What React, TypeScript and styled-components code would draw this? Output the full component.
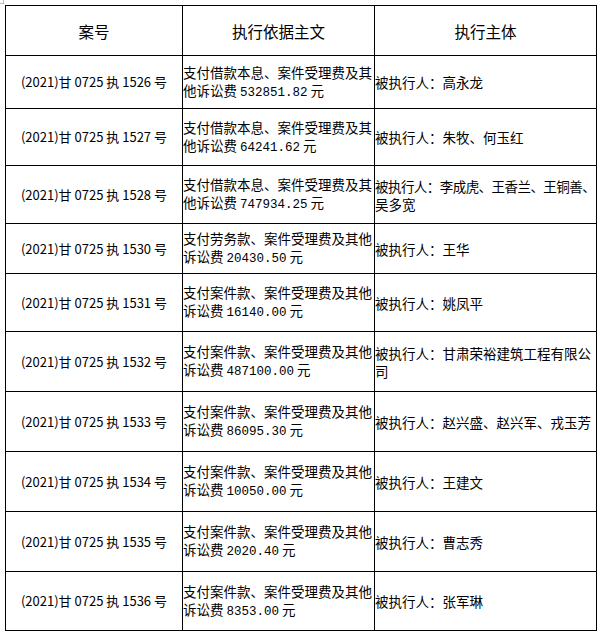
import React from "react";
import styled, { createGlobalStyle } from "styled-components";

const Global = createGlobalStyle`
  html, body { margin: 0; padding: 0; background: #fff; }
  body { font-family: "Noto Sans CJK SC", "Liberation Sans", sans-serif; color: #000; }
`;

const Page = styled.div`
  position: relative;
  padding: 5px 0 0 5px;
`;

const Mark = styled.div<{ $x: number; $y: number }>`
  position: absolute;
  left: ${(p) => p.$x}px;
  top: ${(p) => p.$y}px;
  width: 3px;
  height: 3px;
  border-right: 1px solid #bbb;
  border-bottom: 1px solid #bbb;
`;

const Table = styled.table`
  border-collapse: collapse;
  table-layout: fixed;
  width: 591px;
`;

const HeadCell = styled.th`
  border: 1.5px solid #000;
  height: 49px;
  padding: 0;
  font-weight: 400;
  font-size: 15.5px;
  text-align: center;
  vertical-align: middle;
`;

const Cell = styled.td<{ $center?: boolean; $h: number }>`
  border: 1.5px solid #000;
  padding: 0;
  height: ${(p) => p.$h - 1}px;
  font-size: ${(p) => (p.$center ? 13 : 13.5)}px;
  line-height: 18px;
  text-align: ${(p) => (p.$center ? "center" : "left")};
  vertical-align: middle;
  overflow: visible;
  word-break: break-all;
`;

const Line = styled.span<{ $tight?: boolean }>`
  display: block;
  white-space: nowrap;
  letter-spacing: ${(p) => (p.$tight ? "-0.55px" : "0")};
`;

const Num = styled.span`
  font-family: "Liberation Mono", "DejaVu Sans Mono", monospace;
  font-size: 12.5px;
`;

type Row = { no: string; basis: [string, string]; who: string[]; h: number };

const rows: Row[] = [
  { no: "1526", basis: ["支付借款本息、案件受理费及其他诉讼费 ", "532851.82"], who: ["被执行人：高永龙"], h: 53 },
  { no: "1527", basis: ["支付借款本息、案件受理费及其他诉讼费 ", "64241.62"], who: ["被执行人：朱牧、何玉红"], h: 57 },
  { no: "1528", basis: ["支付借款本息、案件受理费及其他诉讼费 ", "747934.25"], who: ["被执行人：李成虎、王香兰、王铜善、", "吴多宽"], h: 58 },
  { no: "1530", basis: ["支付劳务款、案件受理费及其他诉讼费 ", "20430.50"], who: ["被执行人：王华"], h: 50 },
  { no: "1531", basis: ["支付案件款、案件受理费及其他诉讼费 ", "16140.00"], who: ["被执行人：姚凤平"], h: 58 },
  { no: "1532", basis: ["支付案件款、案件受理费及其他诉讼费 ", "487100.00"], who: ["被执行人：甘肃荣裕建筑工程有限公", "司"], h: 60 },
  { no: "1533", basis: ["支付案件款、案件受理费及其他诉讼费 ", "86095.30"], who: ["被执行人：赵兴盛、赵兴军、戎玉芳"], h: 60 },
  { no: "1534", basis: ["支付案件款、案件受理费及其他诉讼费 ", "10050.00"], who: ["被执行人：王建文"], h: 60 },
  { no: "1535", basis: ["支付案件款、案件受理费及其他诉讼费 ", "2020.40"], who: ["被执行人：曹志秀"], h: 60 },
  { no: "1536", basis: ["支付案件款、案件受理费及其他诉讼费 ", "8353.00"], who: ["被执行人：张军琳"], h: 59 },
];

export default function App() {
  return (
    <>
      <Global />
      <Page>
        <Mark $x={0} $y={0} />
        <Table>
          <colgroup>
            <col style={{ width: 177 }} />
            <col style={{ width: 192 }} />
            <col style={{ width: 222 }} />
          </colgroup>
          <thead>
            <tr>
              <HeadCell>案号</HeadCell>
              <HeadCell>执行依据主文</HeadCell>
              <HeadCell>执行主体</HeadCell>
            </tr>
          </thead>
          <tbody>
            {rows.map((r) => (
              <tr key={r.no}>
                <Cell $center $h={r.h}>
                  (2021)甘 0725 执 {r.no} 号
                </Cell>
                <Cell $h={r.h}>
                  {r.basis[0]}
                  <Num>{r.basis[1]}</Num> 元
                </Cell>
                <Cell $h={r.h}>
                  {r.who.map((l) => (
                    <Line key={l} $tight={l.length > 16}>
                      {l}
                    </Line>
                  ))}
                </Cell>
              </tr>
            ))}
          </tbody>
        </Table>
      </Page>
    </>
  );
}
